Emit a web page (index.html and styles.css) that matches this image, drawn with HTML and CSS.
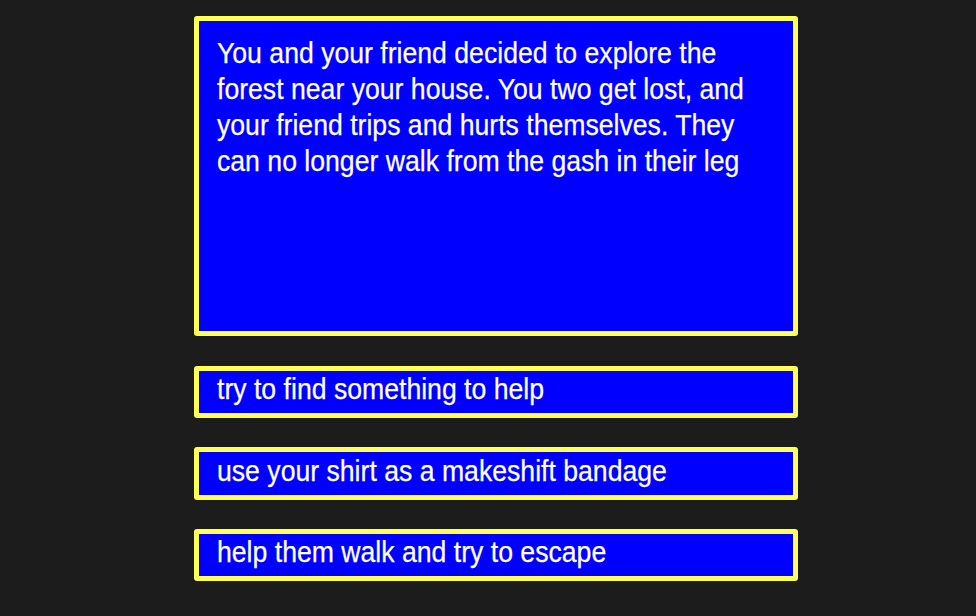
FILE: index.html
```html
<!DOCTYPE html>
<html>
<head>
<meta charset="utf-8">
<link rel="stylesheet" href="styles.css">
</head>
<body>
<main class="game">
  <div class="story"><p class="narrow story-text">You and your friend decided to explore the forest near your house. You two get lost, and your friend trips and hurts themselves. They can no longer walk from the gash in their leg</p></div>
  <div class="choices">
    <button class="choice"><span class="narrow">try to find something to help</span></button>
    <button class="choice"><span class="narrow">use your shirt as a makeshift bandage</span></button>
    <button class="choice"><span class="narrow">help them walk and try to escape</span></button>
  </div>
</main>
</body>
</html>
```
FILE: styles.css
```css
html, body {
  margin: 0;
  padding: 0;
  background: #1c1c1c;
}
body {
  font-family: "Liberation Sans", Arial, sans-serif;
  color: #ffffff;
}
.game {
  width: 604px;
  margin-left: calc(50% - 294px);
  padding-top: 15.5px;
  display: flex;
  flex-direction: column;
  gap: 30px;
}
.story {
  box-sizing: border-box;
  height: 320px;
  background: #0000ff;
  border: 5px solid #ffff55;
  border-radius: 3px;
  padding: 14px 30px 15px 18px;
  overflow: hidden;
}
.narrow {
  font-size: 29px;
  line-height: 36px;
  transform: scaleX(0.918);
  transform-origin: left top;
  -webkit-text-stroke: 0.25px #ffffff;
}
.story-text {
  margin: 0;
  width: calc(100% / 0.918);
}
.choices {
  display: flex;
  flex-direction: column;
  gap: 29px;
}
.choice {
  box-sizing: border-box;
  height: 52.5px;
  background: #0000ff;
  border: 5px solid #ffff55;
  border-radius: 3px;
  padding: 0 18px 5px;
  font-family: inherit;
  color: #ffffff;
  text-align: left;
  margin: 0;
}
.choice .narrow {
  display: inline-block;
  white-space: nowrap;
}
```
